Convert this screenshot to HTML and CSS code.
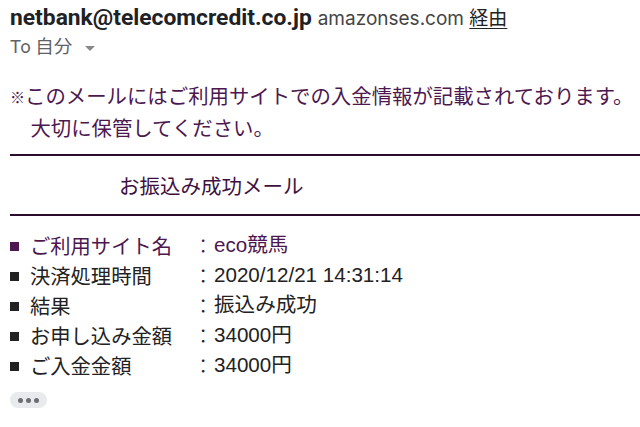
FILE: index.html
```html
<!DOCTYPE html>
<html lang="ja">
<head>
<meta charset="utf-8">
<link rel="stylesheet" href="styles.css">
</head>
<body>
<div class="header">
  <div class="from"><span class="sender">netbank@telecomcredit.co.jp</span> <span class="via">amazonses.com <u>経由</u></span></div>
  <div class="to">To 自分 <span class="caret"></span></div>
</div>
<div class="mail">
  <p class="note"><span class="kome">※</span>このメールにはご利用サイトでの入金情報が記載されております。<br>　大切に保管してください。</p>
  <div class="titlebox">お振込み成功メール</div>
  <div class="rows">
    <div class="row purple"><span class="sq"></span><span class="label">ご利用サイト名</span><span class="colon">：</span><span class="val">eco競馬</span></div>
    <div class="row"><span class="sq"></span><span class="label">決済処理時間</span><span class="colon">：</span><span class="val">2020/12/21 14:31:14</span></div>
    <div class="row"><span class="sq"></span><span class="label">結果</span><span class="colon">：</span><span class="val">振込み成功</span></div>
    <div class="row"><span class="sq"></span><span class="label">お申し込み金額</span><span class="colon">：</span><span class="val">34000円</span></div>
    <div class="row"><span class="sq"></span><span class="label">ご入金金額</span><span class="colon">：</span><span class="val">34000円</span></div>
  </div>
  <div class="more"><span class="dot"></span><span class="dot"></span><span class="dot"></span></div>
</div>
</body>
</html>
```
FILE: styles.css
```css
html, body {
  margin: 0;
  padding: 0;
  background: #fff;
}
body {
  padding-left: 10px;
  overflow: hidden;
}
.header {
  padding-top: 6px;
  font-family: Roboto, "Noto Sans CJK JP", sans-serif;
}
.from {
  height: 24px;
  line-height: 24px;
  white-space: nowrap;
  color: #222;
}
.sender {
  font-size: 22.8px;
  font-weight: 700;
  color: #202124;
}
.via {
  font-family: Inter, "Noto Sans CJK JP", sans-serif;
  font-size: 19px;
  color: #444;
  margin-left: 2px;
}
.via u {
  color: #222;
  text-underline-offset: 3px;
}
.to {
  margin-top: 7px;
  height: 20px;
  line-height: 20px;
  font-size: 18.5px;
  color: #5f6368;
  display: flex;
  align-items: center;
  gap: 5px;
}
.caret {
  width: 0;
  height: 0;
  border-left: 5px solid transparent;
  border-right: 5px solid transparent;
  border-top: 5px solid #888;
  margin-left: 8px;
  margin-top: 2px;
}
.mail {
  font-family: "Liberation Sans", "Noto Sans CJK JP", sans-serif;
  font-size: 20px;
  color: #222;
}
.note {
  margin: 23px 0 0;
  line-height: 30px;
  color: #4d1850;
  white-space: nowrap;
  font-family: "Noto Sans CJK JP", sans-serif;
  font-size: 20.4px;
}
.kome {
  font-size: 15px;
  vertical-align: 1px;
}
.titlebox {
  margin-top: 12px;
  border-top: 2px solid #2b0c2d;
  border-bottom: 2px solid #2b0c2d;
  padding: 14px 0 14px 109px;
  line-height: 30px;
  color: #3e1040;
  font-family: "Noto Sans CJK JP", sans-serif;
  font-size: 20.5px;
}
.rows {
  margin-top: 14px;
}
.row {
  display: grid;
  grid-template-columns: 20px 163px 21px auto;
  align-items: center;
  height: 30px;
  line-height: 30px;
  white-space: nowrap;
}
.label, .colon {
  font-family: "Noto Sans CJK JP", sans-serif;
  font-size: 20.3px;
}
.colon {
  font-weight: 300;
}
.val {
  font-size: 20.6px;
}
.sq {
  width: 9px;
  height: 9px;
  background: #222;
  margin-top: 2px;
}
.purple {
  color: #4d1850;
}
.purple .sq {
  background: #4d1850;
}
.more {
  margin-top: 12px;
  width: 37px;
  height: 16px;
  border-radius: 8px;
  background: #e8eaed;
  display: flex;
  align-items: center;
  justify-content: center;
  gap: 3px;
}
.dot {
  width: 5px;
  height: 5px;
  border-radius: 50%;
  background: #6b6e72;
}
```
